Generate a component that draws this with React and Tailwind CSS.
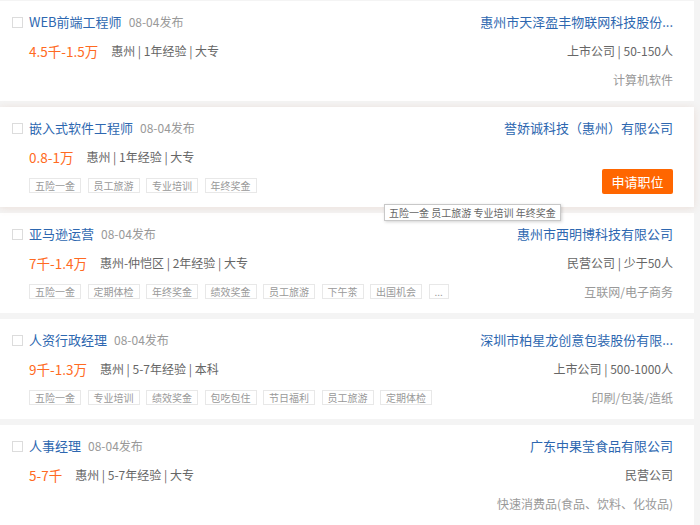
import React from "react";

const jobs = [
  {
    title: "WEB前端工程师",
    salary: "4.5千-1.5万",
    info: "惠州 | 1年经验 | 大专",
    company: "惠州市天泽盈丰物联网科技股份...",
    type: "上市公司 | 50-150人",
    industry: "计算机软件",
    tags: [],
  },
  {
    title: "嵌入式软件工程师",
    salary: "0.8-1万",
    info: "惠州 | 1年经验 | 大专",
    company: "誉娇诚科技（惠州）有限公司",
    tags: ["五险一金", "员工旅游", "专业培训", "年终奖金"],
    hover: true,
  },
  {
    title: "亚马逊运营",
    salary: "7千-1.4万",
    info: "惠州-仲恺区 | 2年经验 | 大专",
    company: "惠州市西明博科技有限公司",
    type: "民营公司 | 少于50人",
    industry: "互联网/电子商务",
    tags: ["五险一金", "定期体检", "年终奖金", "绩效奖金", "员工旅游", "下午茶", "出国机会", "..."],
  },
  {
    title: "人资行政经理",
    salary: "9千-1.3万",
    info: "惠州 | 5-7年经验 | 本科",
    company: "深圳市柏星龙创意包装股份有限...",
    type: "上市公司 | 500-1000人",
    industry: "印刷/包装/造纸",
    tags: ["五险一金", "专业培训", "绩效奖金", "包吃包住", "节日福利", "员工旅游", "定期体检"],
  },
  {
    title: "人事经理",
    salary: "5-7千",
    info: "惠州 | 5-7年经验 | 大专",
    company: "广东中果莹食品有限公司",
    type: "民营公司",
    industry: "快速消费品(食品、饮料、化妆品)",
    tags: [],
  },
];

function Card({ job }) {
  return (
    <div
      className={
        "relative flex h-[100px] w-[694px] shrink-0 justify-between bg-white pt-[13px] " +
        (job.hover ? "shadow-[0_1px_8px_rgba(190,120,80,0.16)] z-10" : "")
      }
    >
      <div className="flex flex-col pl-[12px]">
        <div className="flex h-[16px] items-center">
          <span className="mr-[6px] box-border h-[11px] w-[11px] border border-[#dcdcdc] bg-white" />
          <span className="text-[13px] leading-[16px] text-[#2d67b0]">{job.title}</span>
          <span className="ml-[7px] text-[12px] leading-[16px] text-[#999999]">08-04发布</span>
        </div>
        <div className="mt-[13px] flex h-[16px] items-center pl-[17px]">
          <span className="mr-[13px] text-[13.5px] leading-[16px] text-[#ff6a22]">{job.salary}</span>
          <span className="text-[12px] leading-[16px] text-[#666666]">{job.info}</span>
        </div>
        {job.tags.length > 0 && (
          <div className="mt-[13px] flex gap-[6.5px] pl-[17px]">
            {job.tags.map((t, i) => (
              <span
                key={i}
                className="box-border h-[15px] border border-[#e8e8e8] px-[5px] text-[10px] leading-[13px] text-[#999999]"
              >
                {t}
              </span>
            ))}
          </div>
        )}
      </div>
      <div className="flex flex-col items-end pr-[21px]">
        <div className="flex h-[16px] items-center text-[13px] leading-[16px] text-[#2d67b0]">
          {job.company}
        </div>
        {job.hover ? (
          <button className="mt-[33px] h-[25px] w-[71px] rounded-[2px] bg-[#ff6600] text-[13px] text-white">
            申请职位
          </button>
        ) : (
          <>
            <div className="mt-[13px] flex h-[16px] items-center text-[12px] leading-[16px] text-[#666666]">
              {job.type}
            </div>
            <div className="mt-[13px] flex h-[15px] items-center text-[12px] leading-[15px] text-[#999999]">
              {job.industry}
            </div>
          </>
        )}
      </div>
      {job.hover && (
        <div className="absolute left-[384px] top-[97px] z-20 box-border flex h-[17px] items-center whitespace-nowrap border border-[#c8c8c8] bg-white px-[4px] text-[10px] leading-[15px] text-[#666666] shadow-[1px_1px_3px_rgba(0,0,0,0.18)]">
          五险一金 员工旅游 专业培训 年终奖金
        </div>
      )}
    </div>
  );
}

export default function App() {
  return (
    <div className="h-[525px] w-[700px] overflow-hidden bg-[#f4f4f4] font-['Noto_Sans_CJK_SC',sans-serif]">
      <div className="flex flex-col gap-[6px] pt-[1px]">
        {jobs.map((j, i) => (
          <Card key={i} job={j} />
        ))}
      </div>
    </div>
  );
}
